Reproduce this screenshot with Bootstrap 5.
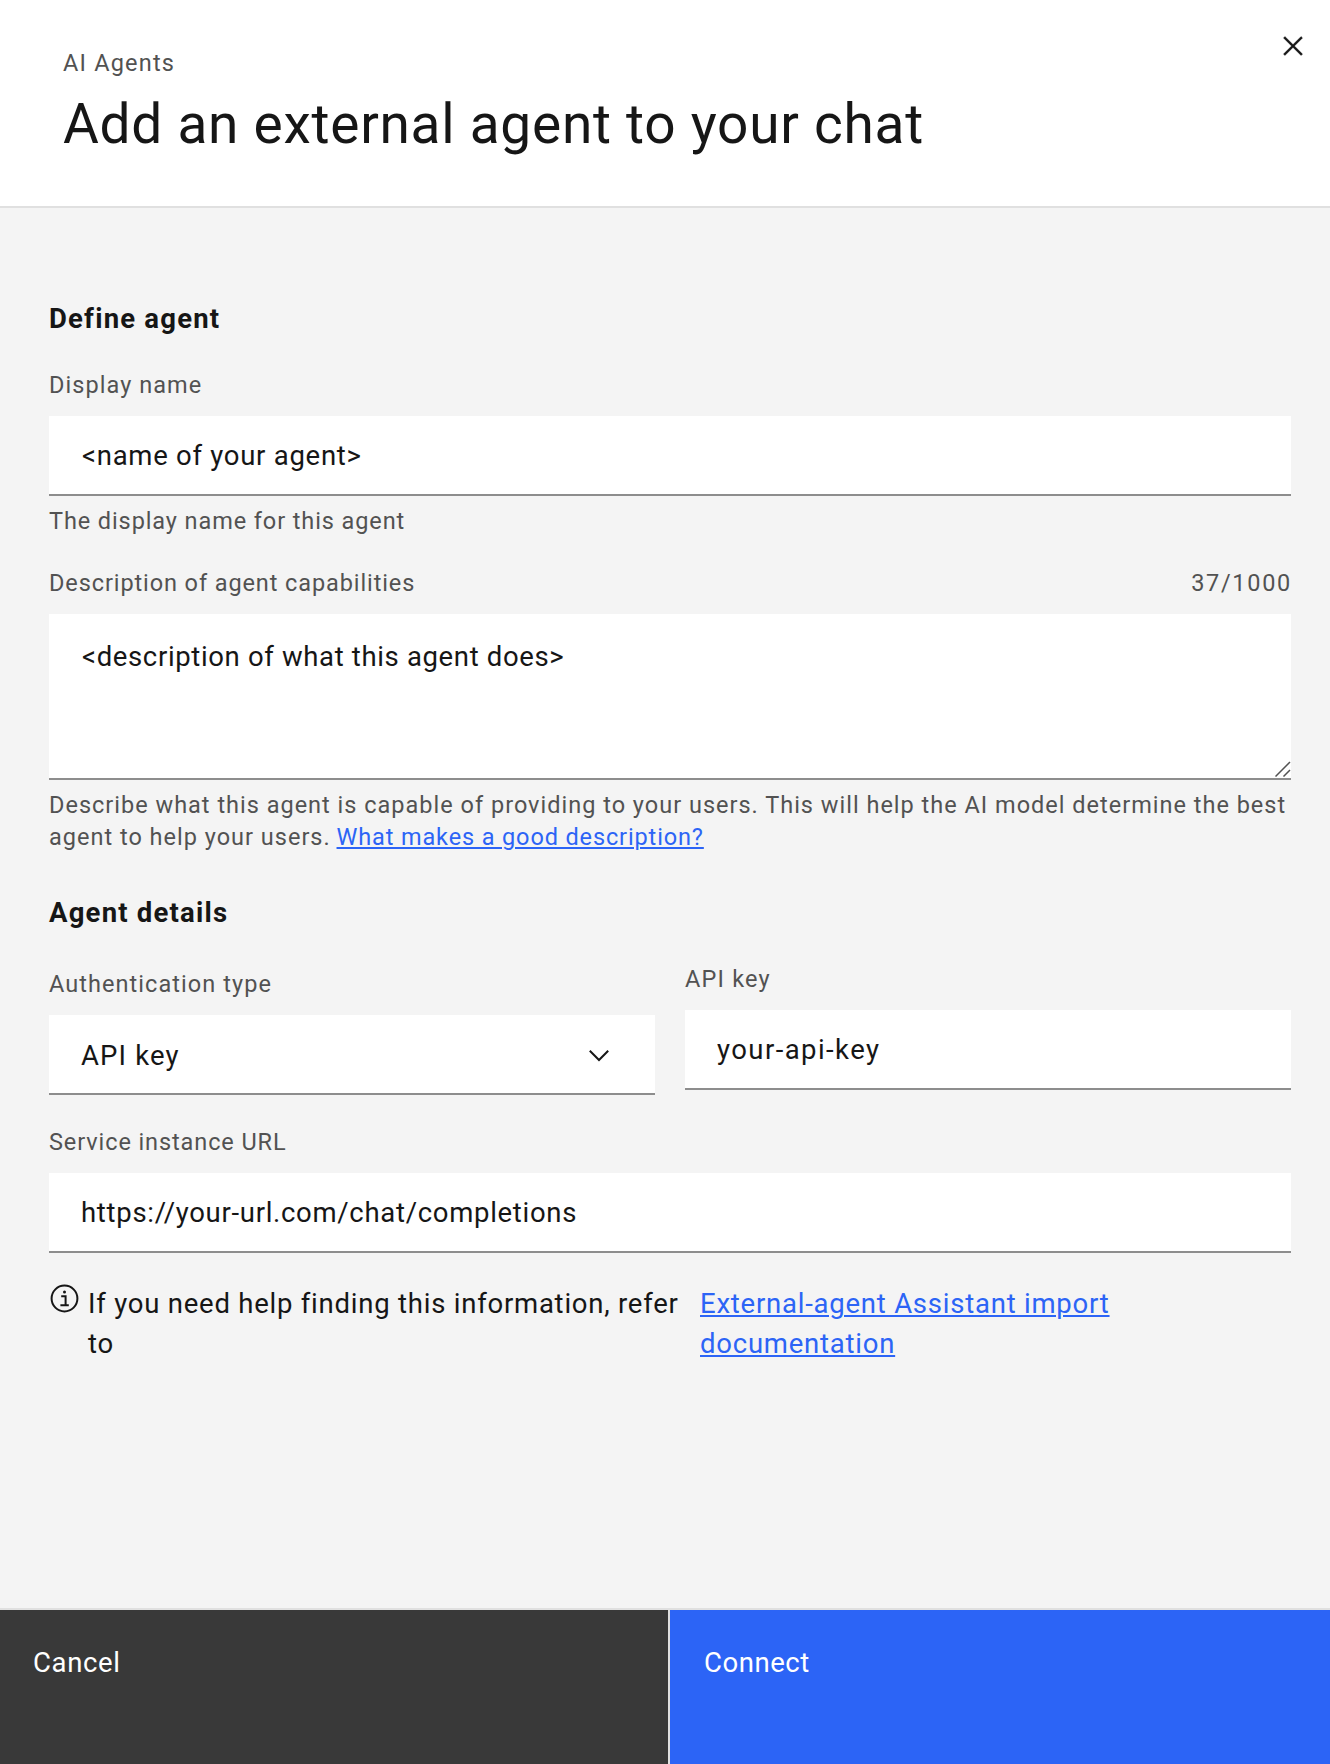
<!DOCTYPE html>
<html lang="en">
<head>
<meta charset="utf-8">
<meta name="viewport" content="width=device-width, initial-scale=1">
<title>Add an external agent</title>
<link href="https://cdn.jsdelivr.net/npm/bootstrap@5.3.0/dist/css/bootstrap.min.css" rel="stylesheet">
<style>
  body { font-family: Roboto, "Liberation Sans", sans-serif; color: #161616; background: #f4f4f4; }
  .tearsheet { height: 1764px; }
  .sheet-head { height: 208px; padding: 47px 0 0 63px; border-bottom: 2px solid #e0e0e0; }
  .sheet-title { font-size: 55px; line-height: 64px; font-weight: 400; letter-spacing: .73px; margin: 13px 0 0; }
  .close-btn { top: 29px; right: 20px; color: #161616; line-height: 0; }
  .sheet-body { padding: 93px 39px 0 49px; }
  .section-title { font-size: 27.5px; line-height: 36px; font-weight: 700; letter-spacing: 1.2px; margin: 0; }
  .section-two { margin-top: 42px; }
  .caption { font-size: 23.5px; line-height: 32px; letter-spacing: 1px; color: #525252; display: block; }
  .sheet-body a, .help-row a { color: #2c64f6; text-decoration-thickness: 2px; text-underline-offset: 2px; }
  .field-label { margin: 0 0 15px; }
  .form-control.field, .form-select.field {
    height: 80px; border: 0; border-bottom: 2px solid #8d8d8d; border-radius: 0; background-color: #fff;
    padding: 1px 32px 0; font-size: 27.5px; line-height: 40px; letter-spacing: .7px; color: #161616; box-shadow: none;
  }
  .form-control.field-area { height: 166px; padding: 23px 33px 0; letter-spacing: .65px; resize: none; display: block; }
  .form-control.field-name { padding-left: 33px; letter-spacing: .73px; }
  .form-select.field { background-image: none; padding-top: 3px; letter-spacing: 1.14px; }
  .chevron { right: 46px; top: 35px; }
  .grip { right: 0; bottom: 3px; }
  .name-help { margin-top: 9px; }
  .describe { margin-top: 30px; }
  .describe-help { margin: 9px -20px 0 0; }
  .describe-help a { letter-spacing: .87px; margin-left: -1px; }
  .auth-row { margin-top: 32px; gap: 30px; }
  .auth-type { padding-top: 5px; }
  .service { margin-top: 31px; }
  .help-row { margin-top: 31px; font-size: 27.5px; line-height: 40px; letter-spacing: .77px; }
  .help-icon { width: 39px; padding: 0 0 0 1px; line-height: 0; }
  .help-text { width: 612px; }
  .help-link { width: 430px; }
  .sheet-foot { height: 156px; border-top: 2px solid #e0e0e0; background: #e0e0e0; gap: 2px; }
  .sheet-foot .btn { border: 0; border-radius: 0; color: #fff; font-size: 27.5px; line-height: 36px; padding: 35px 33px 30px; text-align: left; display: flex; align-items: flex-start; }
  .btn-cancel { width: 668px; letter-spacing: .65px; }
  .sheet-foot .btn-cancel { background: #393939; }
  .sheet-foot .btn-connect { background: #2c64f6; letter-spacing: .55px; padding-left: 34px; }
  .ls-wide { letter-spacing: 1.2px; }
  .ls-mid { letter-spacing: 1.06px; }
  .ls-tight { letter-spacing: .9px; }
  .ls-count { letter-spacing: 1.7px; margin-right: -1px; }
  .form-control.ls-key { letter-spacing: 1.42px; }
</style>
<script src="https://cdn.jsdelivr.net/npm/bootstrap@5.3.0/dist/js/bootstrap.bundle.min.js"></script>
</head>
<body>
<div class="tearsheet d-flex flex-column">
  <header class="sheet-head bg-white position-relative flex-shrink-0">
    <div class="caption ls-wide">AI Agents</div>
    <h1 class="sheet-title">Add an external agent to your chat</h1>
    <button type="button" class="close-btn btn p-0 border-0 position-absolute" aria-label="Close">
      <svg width="34" height="34" viewBox="0 0 32 32" fill="currentColor"><path d="M17.4 16 25 8.4 23.6 7 16 14.6 8.4 7 7 8.4 14.6 16 7 23.6 8.4 25 16 17.4 23.6 25 25 23.6z" stroke="currentColor" stroke-width=".3"/></svg>
    </button>
  </header>

  <main class="sheet-body flex-grow-1">
    <h2 class="section-title">Define agent</h2>
    <div class="mt-4 pt-2">
      <label class="caption field-label ls-mid" for="name">Display name</label>
      <input id="name" class="form-control field field-name" type="text" value="&lt;name of your agent&gt;">
      <div class="caption name-help ls-tight">The display name for this agent</div>
    </div>

    <div class="describe">
      <div class="d-flex justify-content-between">
        <label class="caption field-label ls-tight" for="desc">Description of agent capabilities</label>
        <span class="caption ls-count">37/1000</span>
      </div>
      <div class="position-relative">
        <textarea id="desc" class="form-control field field-area">&lt;description of what this agent does&gt;</textarea>
        <svg class="grip position-absolute" width="16" height="16" viewBox="0 0 16 16" fill="none" stroke="#525252" stroke-width="1.5"><path d="M.5 15.5 15 1M8.5 15.5 15 9"/></svg>
      </div>
      <div class="caption describe-help">Describe what this agent is capable of providing to your users. This will help the AI model determine the best<br>agent to help your users. <a href="#">What makes a good description?</a></div>
    </div>

    <h2 class="section-title section-two">Agent details</h2>
    <div class="auth-row d-flex">
      <div class="auth-type flex-fill w-50">
        <label class="caption field-label ls-mid" for="auth">Authentication type</label>
        <div class="position-relative">
          <select id="auth" class="form-select field"><option>API key</option></select>
          <svg class="chevron position-absolute" width="20" height="12" viewBox="0 0 20 12" fill="none" stroke="#161616" stroke-width="2"><path d="M.8.8 10 10 19.2.8"/></svg>
        </div>
      </div>
      <div class="flex-fill w-50">
        <label class="caption field-label ls-wide" for="key">API key</label>
        <input id="key" class="form-control field ls-key" type="text" value="your-api-key">
      </div>
    </div>

    <div class="service">
      <label class="caption field-label ls-tight" for="url">Service instance URL</label>
      <input id="url" class="form-control field" type="text" value="https://your-url.com/chat/completions">
    </div>

    <div class="help-row d-flex">
      <div class="help-icon flex-shrink-0">
        <svg width="29" height="29" viewBox="0 0 29 29"><circle cx="14.5" cy="14.5" r="12.9" fill="none" stroke="#161616" stroke-width="2"/><circle cx="14.5" cy="7.9" r="1.5" fill="#161616"/><path d="M11.2 12.2h4.4v9M10.4 21.3h8.4" fill="none" stroke="#161616" stroke-width="2"/></svg>
      </div>
      <div class="help-text flex-shrink-0">If you need help finding this information, refer<br>to</div>
      <div class="help-link"><a href="#">External-agent Assistant import documentation</a></div>
    </div>
  </main>

  <footer class="sheet-foot d-flex flex-shrink-0">
    <button type="button" class="btn btn-cancel flex-shrink-0">Cancel</button>
    <button type="button" class="btn btn-connect flex-grow-1">Connect</button>
  </footer>
</div>
</body>
</html>
